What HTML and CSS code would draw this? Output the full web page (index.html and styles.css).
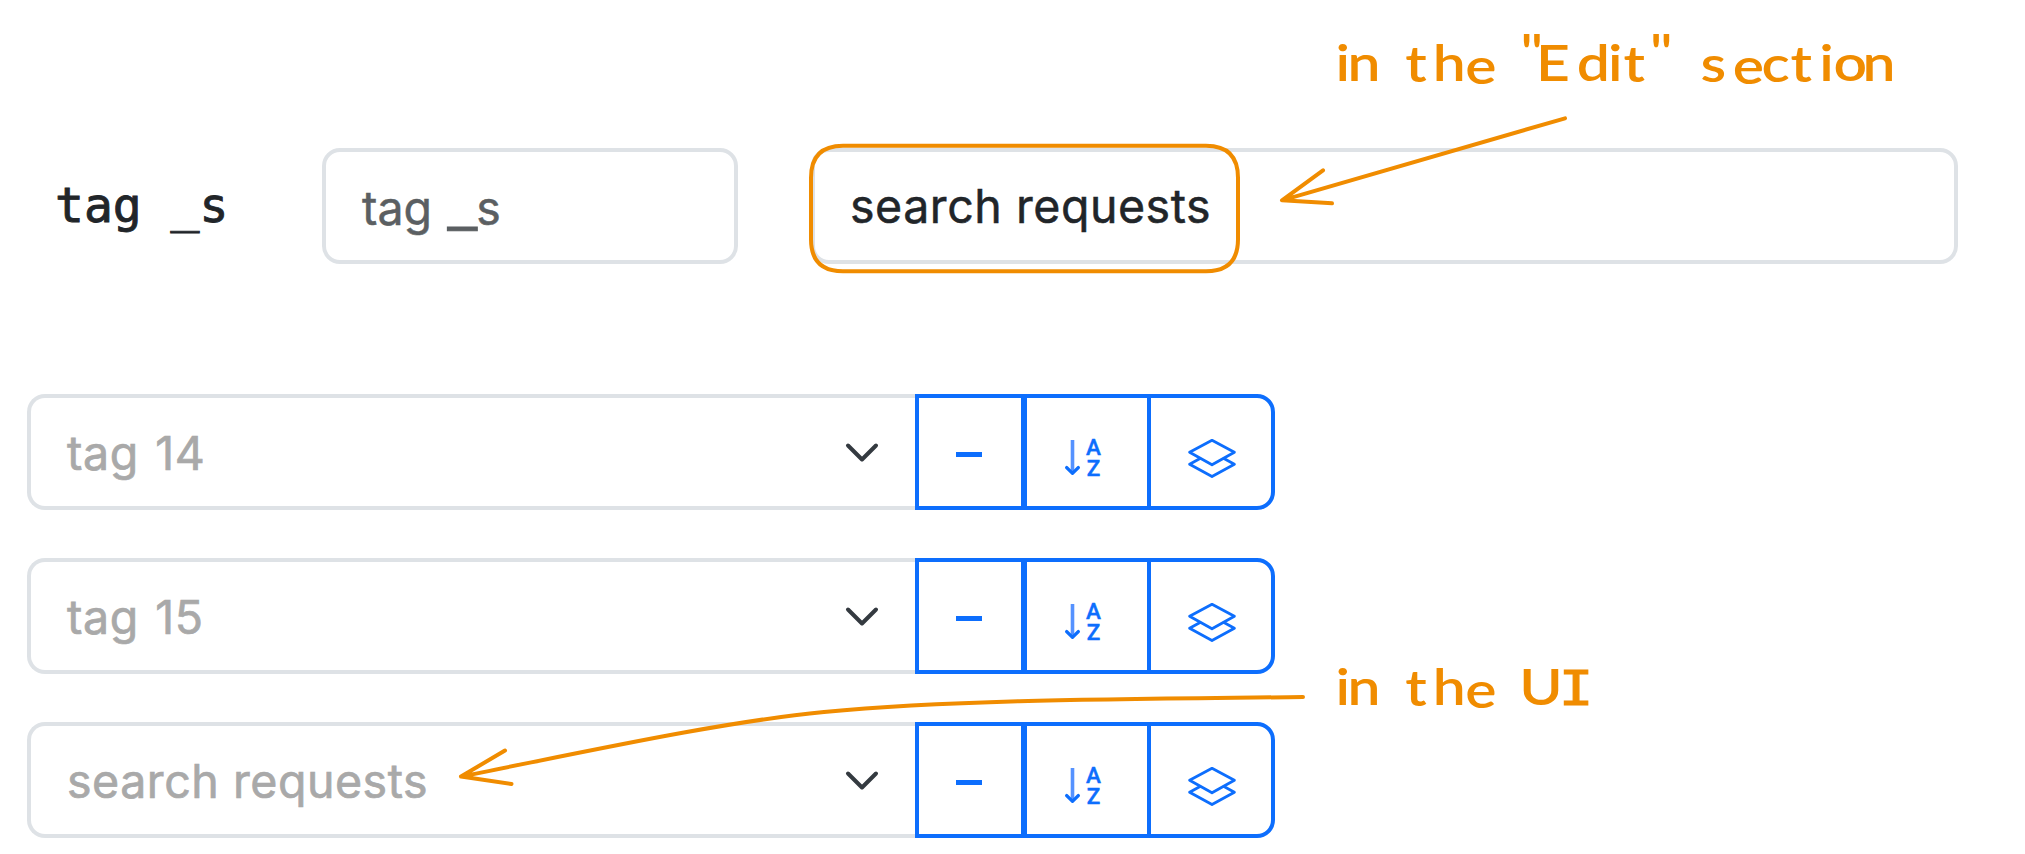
FILE: index.html
```html
<!DOCTYPE html>
<html lang="en">
<head>
<meta charset="utf-8">
<title>Tag names</title>
<link rel="stylesheet" href="styles.css">
</head>
<body>
<svg class="defs" width="0" height="0" aria-hidden="true">
  <symbol id="chevron" viewBox="0 0 34 22"><path d="M3 3.5 17 17.5 31 3.5" fill="none" stroke="#343a40" stroke-width="4" stroke-linecap="round" stroke-linejoin="round"/></symbol>
  <symbol id="down" viewBox="0 0 18 42">
    <path d="M8.500 3V36" fill="none" stroke="#5592ff" stroke-width="3.6"/>
    <path d="M2.6 30.5 8.5 36.3 14.4 30.5" fill="none" stroke="#0d6efd" stroke-width="3.2" stroke-linecap="round" stroke-linejoin="round"/>
  </symbol>
  <symbol id="layers" viewBox="0 0 52 42">
    <path d="M26 2.3 48.4 14.3 26 26.8 3.6 14.3ZM14.5 20.3 3.6 26.3 26 38.6 48.4 26.3 37.5 20.3" fill="none" stroke="#0d6efd" stroke-width="2.8" stroke-linejoin="round"/>
  </symbol>
</svg>
<main class="page">
  <section class="edit-row">
    <div class="tag-label">tag _s</div>
    <div class="field field-key"><span>tag </span><span class="underscore">_</span><span>s</span></div>
    <div class="field field-value">search requests</div>
  </section>
  <section class="tag-list">
    <div class="tag-group">
      <div class="select"><span class="tag-name">tag 14</span><svg class="chevron"><use href="#chevron"/></svg></div>
      <div class="btn btn-minus"><i class="minus"></i></div>
      <div class="btn btn-sort"><svg class="down"><use href="#down"/></svg><span class="az"><b>A</b><b>Z</b></span></div>
      <div class="btn btn-layers"><svg class="layers"><use href="#layers"/></svg></div>
    </div>
    <div class="tag-group">
      <div class="select"><span class="tag-name">tag 15</span><svg class="chevron"><use href="#chevron"/></svg></div>
      <div class="btn btn-minus"><i class="minus"></i></div>
      <div class="btn btn-sort"><svg class="down"><use href="#down"/></svg><span class="az"><b>A</b><b>Z</b></span></div>
      <div class="btn btn-layers"><svg class="layers"><use href="#layers"/></svg></div>
    </div>
    <div class="tag-group">
      <div class="select"><span class="tag-name-plain">search requests</span><svg class="chevron"><use href="#chevron"/></svg></div>
      <div class="btn btn-minus"><i class="minus"></i></div>
      <div class="btn btn-sort"><svg class="down"><use href="#down"/></svg><span class="az"><b>A</b><b>Z</b></span></div>
      <div class="btn btn-layers"><svg class="layers"><use href="#layers"/></svg></div>
    </div>
  </section>
  <svg class="notes" viewBox="0 0 2025 854">
    <g class="ink">
      <path d="M843 145.700H1206Q1238 145.700 1238 177.700V239.300Q1238 271.300 1206 271.300H843Q811 271.300 811 239.300V177.700Q811 145.700 843 145.700Z"/>
      <path d="M1565 118.300 1282 200.300M1323 170.300 1282 200.300 1332 203.300"/>
      <path d="M1303 697C1140 699 960 699 824 712C720 722 580 753 461 776.500M505 750.500 461 776.500 511.500 784"/>
    </g>
    <g class="hand" transform="scale(1.2 1)">
      <text x="1113 1123" y="81">in</text>
      <text x="1171 1194 1221" y="82 81 84">the</text>
      <text x="1267 1280 1314 1340 1353 1375" y="70 81 81 81 82 70">"Edit"</text>
      <text x="1417 1444 1468 1492 1516 1528 1552" y="82 84 82 82 81 81 81">section</text>
      <text x="1113 1123" y="705">in</text>
      <text x="1171 1194 1221" y="706 705 708">the</text>
      <text x="1266" y="705">U<tspan class="slab" x="1299">I</tspan></text>
    </g>
  </svg>
</main>
</body>
</html>
```
FILE: styles.css
```css
* { box-sizing: border-box; }
body { margin: 0; background: #fff; font-family: Inter, "Liberation Sans", sans-serif; color: #212529; }
.defs { position: absolute; }
.page { position: relative; width: 2025px; height: 854px; padding: 148px 0 0 27px; overflow: hidden; }
.edit-row { display: flex; height: 116px; }
.tag-label { width: 295px; padding-left: 28px; font: 48px/115px "DejaVu Sans Mono", monospace; white-space: pre; -webkit-text-stroke: 0.9px; }
.field { height: 116px; border: 4px solid #dee2e6; border-radius: 18px; font-size: 46.5px; line-height: 108px; white-space: pre; -webkit-text-stroke: 0.5px; }
.field-key { display: flex; width: 416px; margin-right: 73px; padding: 2px 0 0 36px; color: #5b5f62; }
.underscore { width: 18px; margin: 0 7px 0 6px; transform: translateY(2px) scaleX(1.4); -webkit-text-stroke: 0.9px; }
.field-value { width: 1147px; padding-left: 35px; letter-spacing: 0.55px; }
.tag-list { display: grid; gap: 48px; margin-top: 130px; }
.tag-group { display: flex; height: 116px; }
.select { display: flex; align-items: center; justify-content: space-between; width: 888px; padding: 2px 36px 0 36px; border: 4px solid #dee2e6; border-right: 0; border-radius: 18px 0 0 18px; color: #a9a9a9; font-size: 46.5px; letter-spacing: 0.55px; white-space: nowrap; -webkit-text-stroke: 0.7px; }
.tag-name { word-spacing: 3px; }
.chevron { width: 34px; height: 22px; }
.btn { display: flex; align-items: center; justify-content: center; border: 4px solid #0d6efd; }
.btn-minus { width: 112px; padding-right: 2px; border-right-width: 6px; }
.btn-sort { justify-content: flex-start; width: 120px; padding: 12px 0 0 37px; border-left: 0; border-right: 0; }
.btn-layers { width: 128px; border-radius: 0 18px 18px 0; }
.minus { width: 26px; height: 5px; margin-top: 4px; background: #0d6efd; }
.down { width: 18px; height: 42px; }
.az { display: grid; width: 15px; margin-left: 4px; color: #0d6efd; justify-items: center; }
.az b { height: 21px; font: 500 22.5px/21px Roboto, sans-serif; -webkit-text-stroke: 0.4px; }
.layers { width: 52px; height: 42px; margin: 14px 0 0 2px; }
.notes { position: absolute; left: 0; top: 0; width: 2025px; height: 854px; }
.ink { fill: none; stroke: #f08c00; stroke-width: 4; stroke-linecap: round; stroke-linejoin: round; }
.hand { font: 600 49px Lato, sans-serif; font-variant-ligatures: none; fill: #f08c00; }
.slab { font: 400 48px "DejaVu Sans Mono", monospace; stroke: #f08c00; stroke-width: 1; }
```
